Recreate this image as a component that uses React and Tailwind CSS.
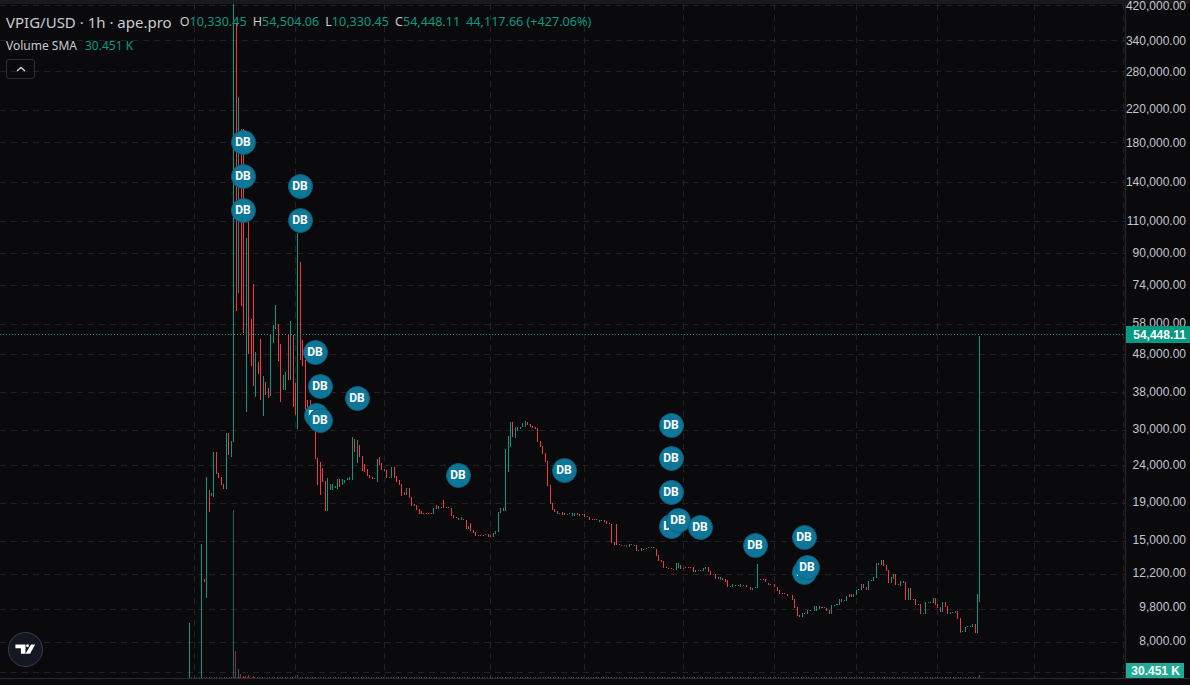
import React from "react";

const G = "#089981";
const R = "#f23645";

// each block: [offsetX, offsetY, "x,top,bottom,colour ..."] values read at 3x
const blocks = [
  [820, 540, "3,201,204,g 12,201,204,r 18,204,213,r 27,210,222,r 33,195,222,g 42,195,198,g 48,192,195,g 57,177,195,g 63,177,186,r 72,180,183,g 78,168,183,g 87,162,171,r 93,162,171,r 99,162,171,g 108,150,165,g 114,147,150,g 123,132,150,g 129,132,144,r 138,141,150,r 144,123,150,g 153,120,123,g 159,111,123,g 169,69,114,g 175,69,75,r 184,60,75,g 190,60,78,r 199,75,93,r 205,90,129,r 214,111,129,g 220,102,117,g 226,102,135,r 235,132,135,r 241,123,138,g 250,123,129,g 256,126,180,r 265,144,180,g 271,144,180,r 280,177,180,g 286,177,195,r 295,192,195,g 301,192,222,r 310,219,222,g 316,186,222,g 325,186,189,g 331,186,189,g 340,174,189,g 346,174,195,r 352,192,204,r 361,201,216,r 367,186,216,g 376,186,201,r 381,198,222,r 391,216,222,g 397,216,219,r 406,213,219,g 412,213,237,r 421,234,278,r 427,273,276,g 436,261,276,g 442,258,261,g 451,258,261,g 457,252,261,g 466,252,279,r 472,162,279,g 478,-612,186,g"],
  [620, 490, "3,166,168,r 12,166,168,r 18,166,170,r 27,162,171,g 33,162,165,r 42,165,168,g 48,165,183,r 54,180,183,g 63,174,183,g 69,177,180,r 78,174,177,g 84,171,174,g 93,171,174,r 99,171,174,g 108,177,198,r 114,195,213,r 123,210,216,r 129,213,234,r 138,231,234,r 144,234,237,r 153,234,237,r 159,237,240,r 168,219,240,g 174,219,234,g 180,225,237,r 189,234,237,g 195,231,234,r 204,231,234,r 210,231,234,r 219,231,246,r 225,240,246,g 234,240,243,g 240,240,243,g 250,234,243,g 255,231,237,g 264,231,246,r 270,243,255,r 279,252,255,g 285,252,267,r 294,261,267,g 300,261,270,g 306,264,270,r 315,267,276,r 321,270,291,r 330,288,291,g 336,282,291,g 345,285,288,r 354,285,288,r 360,282,291,g 369,285,288,r 379,285,291,r 390,291,300,r 396,294,300,g 405,291,294,g 411,222,294,g 420,267,270,r 429,267,270,r 435,267,276,r 444,279,285,r 450,282,285,r 462,282,291,r 471,291,303,r 477,300,312,r 486,309,312,r 492,309,312,r 501,312,318,r 516,315,330,r 522,327,354,r 531,351,378,r 537,375,381,r 546,369,381,g 552,369,372,r 561,360,372,g 570,360,363,r 582,348,363,g 588,348,363,g 597,348,357,r 606,351,354,r 618,354,363,r 627,360,372,r 633,345,372,g 642,345,348,g 651,342,345,g 657,327,345,g"],
  [380, 400, "3,189,210,r 12,207,213,r 18,210,234,r 27,231,234,g 33,201,234,g 42,201,234,r 48,228,246,r 57,240,255,r 63,252,288,r 72,276,285,r 78,264,285,g 87,264,294,r 93,291,318,r 102,312,318,r 108,315,330,r 117,327,342,r 123,333,342,r 129,339,342,r 138,339,342,r 144,339,342,r 153,339,342,r 159,324,342,g 168,315,327,r 174,318,327,g 183,321,324,g 190,300,324,r 198,321,324,r 204,321,324,r 213,324,348,r 220,345,354,r 228,351,354,r 235,354,360,r 243,351,360,g 249,357,360,g 258,360,387,r 264,378,387,g 270,369,393,r 279,390,399,r 285,396,408,r 294,405,408,r 300,405,408,r 309,405,408,r 315,402,405,g 324,402,411,r 330,405,411,r 339,399,411,g 345,393,402,g 354,336,396,g 361,324,339,g 370,324,333,r 376,147,333,g 385,108,216,g 391,66,141,g 397,66,111,r 406,81,114,g 412,81,93,g 421,81,87,g 427,69,81,g 436,63,81,g 442,66,75,r 451,72,81,r 457,78,84,r 466,81,87,r 472,84,126,r 481,123,141,r 487,138,162,r 496,159,186,r 502,183,258,r 511,255,312,r 517,309,330,r 523,327,336,r 532,333,342,r 538,339,342,g 547,336,345,r 553,339,345,r 562,342,345,g 568,339,342,g 577,339,348,g 583,339,348,g 592,339,345,r 598,342,348,r 607,342,345,g 613,342,351,r 622,348,351,r 628,351,360,r 637,357,360,r 643,357,360,r 649,357,360,r 658,360,366,g 664,360,363,g 673,360,366,r 679,363,372,r 688,369,372,r 694,372,429,r 703,426,435,r 709,372,435,r 718,432,435,r"],
  [180, 370, "405,150,267,r 411,264,345,r 420,276,375,r 426,294,336,r 435,333,423,r 441,324,423,g 450,342,360,g 456,342,360,g 465,348,354,g 471,327,357,g 477,327,351,r 486,327,345,g 492,330,339,g 501,324,330,g 507,321,330,g 516,201,330,g 522,207,246,r 531,210,279,g 537,225,261,r 546,258,303,r 552,282,306,r 561,297,318,r 567,315,324,r 576,321,327,r 582,324,327,g 591,267,336,g 597,261,285,r 78,321,684,g 87,360,426,r 93,369,378,g 99,246,381,g 108,246,312,r 114,309,324,r 123,321,345,r 129,342,357,r 138,189,357,g 144,189,255,r 153,213,261,g 381,90,120,r 390,90,135,r 396,105,180,r"],
];

// the tall part of the chart, in page pixels: x, top, bottom, colour
const tall = "233,4,442,g 236,24,311,r 238,97,293,g 241,129,306,r 243,129,333,r 246,238,412,g 248,200,354,r 251,319,366,r 253,284,386,r 255,352,397,g 258,362,374,r 260,339,400,r 263,376,416,g 265,382,395,r 268,388,398,r 270,334,396,g 273,325,343,g 275,305,329,g 278,324,361,r 280,344,402,r 283,375,390,g 285,372,390,g 288,335,380,r 290,321,380,g 293,335,407,r 295,383,415,r 297,233,429,g 300,262,360,r 302,340,366,r 305,360,410,r 201,544,678,g 204,579,582,r 189,623,678,g";

const candles = [];
blocks.forEach(([ox, oy, s]) =>
  s.split(" ").forEach((it) => {
    const [x, t, b, c] = it.split(",");
    candles.push({ x: ox + Math.floor(+x / 3), y: oy + +t / 3, h: (+b - +t) / 3, c: c === "g" ? G : R });
  })
);
tall.split(" ").forEach((it) => {
  const [x, t, b, c] = it.split(",");
  candles.push({ x: +x, y: +t, h: +b - +t, c: c === "g" ? G : R });
});

const gridY = [5, 40, 71, 110, 142, 182, 221, 253, 285, 324, 354, 392, 430, 465, 503, 541, 574, 609, 642, 672];
const gridX = [194, 295, 384, 490, 584, 683, 774, 856, 937, 1034, 1123];

const ticks = [
  ["420,000.00", 6], ["340,000.00", 41], ["280,000.00", 72], ["220,000.00", 109], ["180,000.00", 143],
  ["140,000.00", 182], ["110,000.00", 221], ["90,000.00", 253], ["74,000.00", 285], ["58,000.00", 323],
  ["48,000.00", 354], ["38,000.00", 392], ["30,000.00", 429], ["24,000.00", 465], ["19,000.00", 502],
  ["15,000.00", 540], ["12,200.00", 573], ["9,800.00", 607], ["8,000.00", 641],
];

const markers = [
  [316, 415], [671, 526], [804, 572],
  [243, 142], [243, 176], [243, 210], [300, 186], [300, 220], [315, 352], [320, 386], [357, 398], [320, 420],
  [458, 475], [564, 470], [671, 425], [671, 458], [671, 492], [678, 520], [700, 527], [755, 545], [804, 537], [807, 567],
];

const volume = [
  [233, 510, "#0f6e60"], [235, 651, "#8c2a35"], [238, 669, "#0f6e60"], [240, 674, "#8c2a35"], [243, 676, "#8c2a35"],
  [245, 676, "#8c2a35"], [248, 675, "#8c2a35"], [253, 676, "#8c2a35"], [297, 675, "#0f6e60"], [979, 675, "#0f6e60"],
];
const volDots = [];
for (let i = 0; i < 312; i++) {
  const x = Math.round(191 + i * 2.53);
  volDots.push([x, i % 3 === 1 ? "#0f6e60" : i % 3 === 2 ? "#6e2730" : "#7a2a34"]);
}

function Ohlc({ k, v }) {
  return (
    <span className="mr-[6px]">
      <span className="text-[#c8cad0]">{k}</span>
      <span className="text-[#089981]">{v}</span>
    </span>
  );
}

export default function App() {
  return (
    <div className="w-[1190px] h-[685px] flex flex-col overflow-hidden bg-[#0a0a0d] font-['Noto_Sans','Liberation_Sans',sans-serif]">
      <div className="h-[4px] bg-[#1a1a1d] shrink-0" />
      <div className="flex-1 flex min-h-0">
        <div className="relative w-[1125px] shrink-0">
          <svg className="block" width="1125" height="674" viewBox="0 4 1125 674">
            {gridY.map((y) => (
              <line key={y} x1="0" x2="1125" y1={y + 0.5} y2={y + 0.5} stroke="#222226" strokeDasharray="6 5" />
            ))}
            {gridX.map((x) => (
              <line key={x} x1={x + 0.5} x2={x + 0.5} y1="4" y2="678" stroke="#222226" strokeDasharray="6 5" />
            ))}
            {volDots.map(([x, c]) => (
              <rect key={x} x={x} y="677" width="1" height="1" fill={c} />
            ))}
            {volume.map(([x, y, c]) => (
              <rect key={x} x={x} y={y} width="1" height={678 - y} fill={c} />
            ))}
            {candles.map((b, i) => (
              <rect key={i} x={b.x} y={b.y} width="1" height={b.h} fill={b.c} />
            ))}
            <line x1="0" x2="1125" y1="334.5" y2="334.5" stroke="#089981" strokeDasharray="1 2" />
          </svg>

          {markers.map(([x, y], i) => (
            <div
              key={i}
              className="absolute w-[25px] h-[25px] rounded-full bg-[#0e7799] border border-[#0c5f7a] flex items-center justify-center text-white text-[12px] font-bold leading-none font-['Roboto',sans-serif]"
              style={{ left: x - 12.5, top: y - 4 - 12.5 }}
            >
              DB
            </div>
          ))}

          <div className="absolute left-[6px] top-[9px] flex items-center text-[12.6px] leading-[18px] whitespace-nowrap">
            <span className="text-[15px] text-[#c8cad0] mr-[8px]">VPIG/USD · 1h · ape.pro</span>
            <Ohlc k="O" v="10,330.45" />
            <Ohlc k="H" v="54,504.06" />
            <Ohlc k="L" v="10,330.45" />
            <Ohlc k="C" v="54,448.11" />
            <span className="text-[#089981]">44,117.66 (+427.06%)</span>
          </div>
          <div className="absolute left-[6px] top-[34px] flex items-center gap-[8px] text-[12px] leading-[16px] whitespace-nowrap">
            <span className="text-[#c8cad0]">Volume SMA</span>
            <span className="text-[#089981]">30.451 K</span>
          </div>
          <div className="absolute left-[6px] top-[55px] w-[29px] h-[20px] rounded-[3px] border border-[#2a2e39] flex items-center justify-center">
            <svg width="10" height="6" viewBox="0 0 10 6" fill="none">
              <path d="M1 5l4-3.5L9 5" stroke="#d1d4dc" strokeWidth="1.4" />
            </svg>
          </div>

          <div className="absolute left-[8px] top-[628px] w-[35px] h-[35px] rounded-full bg-[#131722] border border-[#3a3d45] flex items-center justify-center">
            <svg width="21" height="11" viewBox="0 0 22 12">
              <path d="M0 .5h11v10H6V4.5H0z" fill="#fff" />
              <circle cx="13.2" cy="2" r="1.6" fill="#fff" />
              <path d="M17 .5h4.5L16 10.5h-5z" fill="#fff" />
            </svg>
          </div>
        </div>

        <div className="relative flex-1 border-l border-[#2a2a2e] text-[12px] leading-[14px] text-[#c4c6cc] font-['Liberation_Sans',sans-serif]">
          {ticks.map(([t, y]) => (
            <div key={t} className="absolute right-[4px] whitespace-nowrap" style={{ top: y - 4 - 7 }}>
              {t}
            </div>
          ))}
          <div className="absolute left-0 right-0 top-[322px] h-[17px] bg-[#089981] text-white flex items-center justify-end pr-[4px] font-bold">
            54,448.11
          </div>
          <div className="absolute left-0 w-[58px] top-[659px] h-[15px] bg-[#22ab94] text-white flex items-center justify-end pr-[4px] font-bold">
            30.451 K
          </div>
        </div>
      </div>
      <div className="h-[7px] shrink-0 border-t border-[#2a2a2e]" />
    </div>
  );
}
